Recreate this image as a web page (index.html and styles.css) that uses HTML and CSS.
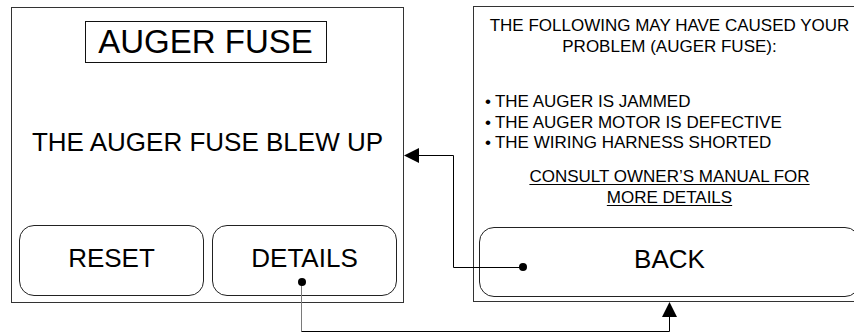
FILE: index.html
```
<html>

<head>
  <title>Auger Fuse</title>
  <link rel="stylesheet" href="styles.css">
</head>

<body>

  <main class="stage">
    <section class="screen alarm">
      <h1 class="title">AUGER FUSE</h1>
      <p class="message">THE AUGER FUSE BLEW UP</p>
      <div class="buttons">
        <button class="key">RESET</button>
        <button class="key">DETAILS</button>
      </div>
    </section>

    <section class="screen details">
      <p class="cause">THE FOLLOWING MAY HAVE CAUSED YOUR<br>PROBLEM (AUGER FUSE):</p>
      <ul class="reasons">
        <li>THE AUGER IS JAMMED</li>
        <li>THE AUGER MOTOR IS DEFECTIVE</li>
        <li>THE WIRING HARNESS SHORTED</li>
      </ul>
      <p class="manual">CONSULT OWNER’S MANUAL FOR<br>MORE DETAILS</p>
      <button class="key back">BACK</button>
    </section>

    <!-- navigation arrows between the two screens -->
    <svg class="links" width="854" height="333" viewBox="0 0 854 333">
      <g fill="none" stroke="#000" stroke-width="1">
        <path d="M301.5 282 V331.5" stroke="#7a7a7a" />
        <path d="M301.5 331.5 H669.5 V316" />
        <path d="M523 267.5 H453.5 V155.5 H418" />
      </g>
      <g fill="#000">
        <circle cx="302" cy="282" r="4" />
        <polygon points="669.5,302 662,317 677,317" />
        <circle cx="523" cy="267" r="4" />
        <polygon points="404,155.5 419,148 419,163" />
      </g>
    </svg>
  </main>

</body>

</html>
```

FILE: styles.css
```
html, body {
  margin: 0;
  overflow: hidden;
  background: #fff;
}

body {
  font-family: "Liberation Sans", Arial, sans-serif;
  color: #000;
}

.stage {
  position: relative;
  width: 854px;
  height: 333px;
  display: flex;
  gap: 69px;
  padding: 7px 0 0 11px;
  box-sizing: border-box;
}

.screen {
  flex: none;
  width: 393px;
  height: 296px;
  box-sizing: border-box;
  border: 1px solid #333;
  display: flex;
  flex-direction: column;
}

.details {
  margin-top: -1px;
}

.title {
  align-self: center;
  margin: 13px 0 0 -4px;
  width: 242px;
  height: 42px;
  box-sizing: border-box;
  border: 1.5px solid #111;
  font-size: 33px;
  font-weight: normal;
  line-height: 39px;
  text-align: center;
}

.message {
  flex: 1;
  margin: 0;
  display: flex;
  align-items: center;
  justify-content: center;
  padding-bottom: 3px;
  font-size: 26px;
}

.buttons {
  display: grid;
  grid-template-columns: 185px 185px;
  gap: 8px;
  padding: 0 6px 6px 7px;
}

.key {
  height: 71px;
  background: #fff;
  border: 1px solid #222;
  border-radius: 15px;
  font-family: inherit;
  font-size: 26px;
  color: #000;
  padding: 0 0 4px 0;
}

.cause,
.reasons,
.manual {
  margin: 0;
  font-size: 17px;
  line-height: 20.6px;
}

.cause {
  padding-top: 9px;
  text-align: center;
}

.reasons {
  list-style: none;
  padding: 0 0 0 11px;
  margin-top: 35px;
}

.reasons li::before {
  content: "•";
  margin-right: 4px;
}

.manual {
  margin-top: 13px;
  text-align: center;
  text-decoration: underline;
  text-underline-offset: 2px;
}

.back {
  margin: 19px 5px 0 5px;
  height: 70px;
  padding-bottom: 6px;
}

.links {
  position: absolute;
  top: 0;
  left: 0;
  pointer-events: none;
}
```
